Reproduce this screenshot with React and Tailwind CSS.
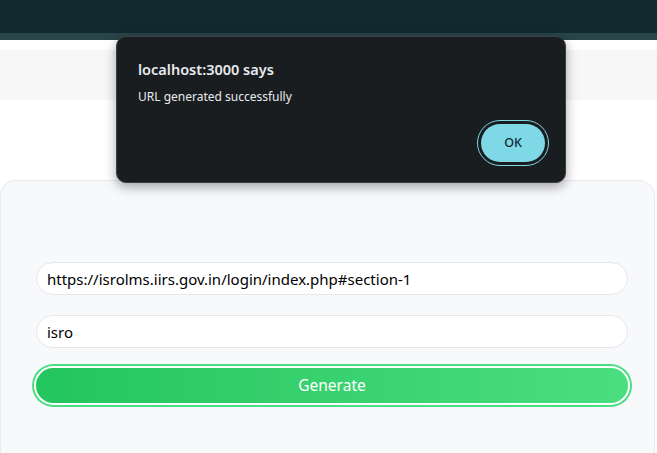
import React from 'react';

const sans = { fontFamily: '"Noto Sans", "Open Sans", sans-serif' };

export default function App() {
    return (
        <div className="relative h-[453px] bg-white overflow-hidden" style={sans}>
            {/* top header */}
            <div className="h-[33px] bg-[#112a30]" />
            <div className="h-[7px] bg-[#29454a]" />
            <div className="h-[10px] bg-white" />
            <div className="h-[50px] bg-[#f7f7f8]" />
            <div className="h-[80px] bg-white" />

            {/* form card */}
            <div className="w-[655px] h-[273px] rounded-t-2xl border border-b-0 border-[#e8eaee] bg-[#f8f9fb] pt-[81px] pl-[35px] pr-[26px]">
                <div className="flex flex-col gap-5">
                    <input
                        readOnly
                        value="https://isrolms.iirs.gov.in/login/index.php#section-1"
                        className="h-[33px] w-full rounded-full border border-[#e5e7eb] bg-white px-[10px] text-[15px] text-black outline-none"
                        style={sans}
                    />
                    <input
                        readOnly
                        value="isro"
                        className="h-[33px] w-full rounded-full border border-[#e5e7eb] bg-white px-[10px] text-[15px] text-black outline-none"
                        style={sans}
                    />
                    <button
                        className="h-[35px] w-full rounded-full bg-gradient-to-r from-[#22c55e] to-[#4ade80] text-[15.5px] text-white ring-2 ring-[#4ade80] ring-offset-2 ring-offset-white"
                        style={sans}
                    >
                        Generate
                    </button>
                </div>
            </div>

            {/* alert dialog */}
            <div className="absolute left-[116px] top-[36px] w-[450px] h-[147px] rounded-[10px] border border-[#3b4045] bg-[#1a1d20] px-[21px] pt-[22px] shadow-[0_4px_12px_rgba(0,0,0,0.35)]">
                <div className="text-[14.5px] font-semibold leading-[20px] text-[#e8eaed]">localhost:3000 says</div>
                <div className="mt-[10px] text-[12px] leading-[16px] text-[#e8eaed]">URL generated successfully</div>
                <div className="absolute right-[16px] bottom-[16px] rounded-full border-[1.5px] border-[#7fd6e4] p-[1px]">
                    <div className="rounded-full border-2 border-[#1a1d20]">
                        <button className="flex h-[38px] w-[64px] items-center justify-center rounded-full bg-[#7fd8e5] text-[12.5px] font-medium text-[#0e2a33]" style={sans}>
                            OK
                        </button>
                    </div>
                </div>
            </div>
        </div>
    );
}
